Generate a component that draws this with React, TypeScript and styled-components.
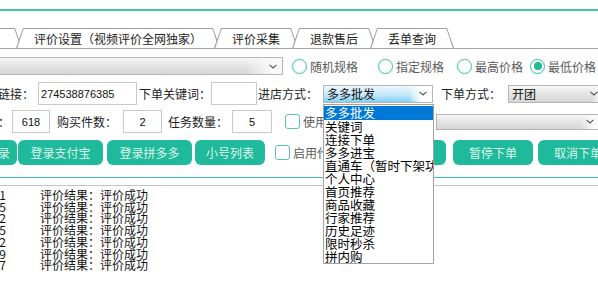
import React from "react";
import styled, { createGlobalStyle, css } from "styled-components";

const GlobalStyle = createGlobalStyle`
  html, body {
    margin: 0;
    padding: 0;
    background: #fff;
    overflow: hidden;
  }
  body {
    font-family: "Noto Sans CJK SC", "Microsoft YaHei", sans-serif;
    font-size: 12px;
    color: #222;
  }
`;

const Window = styled.div`
  width: 598px;
  height: 288px;
  overflow: hidden;
  background: #fff;
`;

const Header = styled.div`
  height: 9px;
  border-bottom: 2px solid #3cc9a3;
`;

const TabStrip = styled.div`
  display: flex;
  height: 20px;
  margin-top: 17px;
  margin-left: -70px;
  border-bottom: 1px solid #a5a5a5;
`;

const Tab = styled.div<{ $pr?: number }>`
  position: relative;
  isolation: isolate;
  display: flex;
  align-items: center;
  height: 20px;
  padding: 0 ${(p) => p.$pr ?? 18}px 0 18px;
  margin-left: -6px;
  white-space: nowrap;
  color: #222;

  &:first-child {
    margin-left: 0;
  }

  &::before,
  &::after {
    content: "";
    position: absolute;
    inset: 0;
  }
  &::before {
    background: #a0a0a0;
    clip-path: polygon(0 100%, 7px 0, calc(100% - 7px) 0, 100% 100%);
  }
  &::after {
    background: #fff;
    clip-path: polygon(
      1.3px 100%,
      7.6px 1px,
      calc(100% - 7.6px) 1px,
      calc(100% - 1.3px) 100%
    );
  }

  span {
    position: relative;
    z-index: 1;
  }
`;

const Panel = styled.div`
  padding-top: 8px;
  padding-bottom: 12px;
  border-bottom: 1px solid #41c3b0;
`;

const Row = styled.div<{ $h: number; $mt: number; $ml?: number }>`
  display: flex;
  align-items: center;
  height: ${(p) => p.$h}px;
  margin-top: ${(p) => p.$mt}px;
  margin-left: ${(p) => p.$ml ?? 0}px;
  white-space: nowrap;
`;

const Label = styled.span<{ $ml?: number; $muted?: boolean }>`
  flex: none;
  margin-left: ${(p) => p.$ml ?? 0}px;
  color: ${(p) => (p.$muted ? "#5a5a5a" : "#222")};
`;

const TextBox = styled.input<{ $w: number; $ml?: number; $center?: boolean }>`
  flex: none;
  box-sizing: border-box;
  width: ${(p) => p.$w}px;
  height: 23px;
  margin: 0 0 0 ${(p) => p.$ml ?? 0}px;
  padding: 0 2px;
  border: 1px solid #c9c9c9;
  background: #fff;
  font-family: "Liberation Sans", Arial, sans-serif;
  font-size: 11px;
  color: #111;
  text-align: ${(p) => (p.$center ? "center" : "left")};
  outline: none;
`;

const selectLook = {
  gray: css`
    background: linear-gradient(to right, transparent 88%, #fafafa 97%),
      linear-gradient(#f6f6f6, #e4e4e4 50%, #d6d6d6);
  `,
  blue: css`
    background: linear-gradient(to right, transparent 78%, #fff 90%),
      linear-gradient(#eef7fd, #c4e6f8 55%, #82cff3);
  `,
};

const Select = styled.div<{
  $w: number;
  $h: number;
  $ml?: number;
  $look: "gray" | "blue";
}>`
  position: relative;
  flex: none;
  display: flex;
  align-items: center;
  box-sizing: border-box;
  width: ${(p) => p.$w}px;
  height: ${(p) => p.$h}px;
  margin-left: ${(p) => p.$ml ?? 0}px;
  padding-left: 3px;
  border: 1px solid #b5b5b5;
  ${(p) => selectLook[p.$look]}
  color: #111;
`;

const Arrow = styled.span`
  display: flex;
  align-items: center;
  justify-content: center;
  width: 16px;
  margin-left: auto;
  margin-right: 1px;
`;

const DropList = styled.ul`
  position: absolute;
  top: calc(100% + 2px);
  left: -1px;
  z-index: 10;
  box-sizing: border-box;
  width: 111px;
  margin: 0;
  padding: 1px 0 0;
  list-style: none;
  background: #fff;
  border: 1px solid #a3a3a3;
`;

const DropItem = styled.li<{ $active?: boolean }>`
  height: 13px;
  line-height: 13px;
  padding-left: 1px;
  overflow: hidden;
  white-space: nowrap;
  font-size: 12.5px;
  color: ${(p) => (p.$active ? "#fff" : "#000")};
  background: ${(p) => (p.$active ? "#0078d7" : "transparent")};

  &:first-child {
    height: 14px;
    line-height: 14px;
  }
`;

const RadioItem = styled.span<{ $ml: number }>`
  display: flex;
  align-items: center;
  gap: 3px;
  margin-left: ${(p) => p.$ml}px;
  color: #5a5a5a;
`;

const RadioDot = styled.span<{ $checked?: boolean }>`
  position: relative;
  box-sizing: border-box;
  width: 15px;
  height: 15px;
  border: 1.5px solid #4cc2a8;
  border-radius: 50%;
  background: radial-gradient(circle, #ffffff 45%, #e3f6f1 100%);
  box-shadow: 0 0 2px rgba(76, 194, 168, 0.45);

  &::after {
    content: "";
    display: ${(p) => (p.$checked ? "block" : "none")};
    position: absolute;
    inset: 2.5px;
    border-radius: 50%;
    background: #1fbb92;
  }
`;

const CheckBox = styled.span<{ $ml: number }>`
  flex: none;
  box-sizing: border-box;
  width: 15px;
  height: 15px;
  margin-left: ${(p) => p.$ml}px;
  border: 1px solid #5cc3ad;
  border-radius: 3px;
  background: #fff;
`;

const Button = styled.button<{ $w: number; $ml?: number }>`
  flex: none;
  width: ${(p) => p.$w}px;
  height: 25px;
  margin-left: ${(p) => p.$ml ?? 0}px;
  padding: 0;
  border: none;
  border-radius: 6px;
  background: #1fba9b;
  color: #dcf4ed;
  font-family: inherit;
  font-size: 12px;
`;

const LogBox = styled.div`
  margin-top: 7px;
  padding-top: 3px;
  border-top: 1px solid #c6c6c6;
`;

const LogGrid = styled.div`
  display: grid;
  grid-template-columns: 114px auto;
  column-gap: 34px;
  margin-left: -108px;
  font-size: 12px;
  line-height: 11.7px;
  color: #111;
  white-space: nowrap;
`;

const LogTime = styled.span`
  text-align: right;
`;

function Chevron() {
  return (
    <svg width="8" height="5" viewBox="0 0 8 5">
      <path d="M0.5 0.8 L4 4 L7.5 0.8" fill="none" stroke="#555" strokeWidth="1.1" />
    </svg>
  );
}

const tabs = [
  { text: "宝贝设置", pr: 26 },
  { text: "评价设置（视频评价全网独家）" },
  { text: "评价采集" },
  { text: "退款售后" },
  { text: "丢单查询" },
];

const radios = [
  { text: "随机规格", ml: 9 },
  { text: "指定规格", ml: 20 },
  { text: "最高价格", ml: 13 },
  { text: "最低价格", ml: 7, checked: true },
];

const entryModes = [
  "多多批发",
  "关键词",
  "连接下单",
  "多多进宝",
  "直通车（暂时下架功能）",
  "个人中心",
  "首页推荐",
  "商品收藏",
  "行家推荐",
  "历史足迹",
  "限时秒杀",
  "拼内购",
];

const logs = [
  "2024-03-18 15:42:21",
  "2024-03-18 15:42:35",
  "2024-03-18 15:42:52",
  "2024-03-18 15:43:05",
  "2024-03-18 15:43:22",
  "2024-03-18 15:43:39",
  "2024-03-18 15:43:57",
];

export default function App() {
  return (
    <Window>
      <GlobalStyle />
      <Header />
      <TabStrip>
        {tabs.map((t) => (
          <Tab key={t.text} $pr={t.pr}>
            <span>{t.text}</span>
          </Tab>
        ))}
      </TabStrip>

      <Panel>
        <Row $h={18} $mt={0}>
          <Select $w={303} $h={18} $ml={-20} $look="gray">
            <span />
            <Arrow>
              <Chevron />
            </Arrow>
          </Select>
          {radios.map((r) => (
            <RadioItem key={r.text} $ml={r.ml}>
              <RadioDot $checked={r.checked} />
              {r.text}
            </RadioItem>
          ))}
        </Row>

        <Row $h={23} $mt={7} $ml={-26}>
          <Label>商品链接：</Label>
          <TextBox $w={99} $ml={4} value="274538876385" readOnly />
          <Label $ml={2}>下单关键词：</Label>
          <TextBox $w={46} value="" readOnly />
          <Label $ml={1}>进店方式：</Label>
          <Select $w={110} $h={18} $ml={5} $look="blue">
            <span>多多批发</span>
            <Arrow>
              <Chevron />
            </Arrow>
            <DropList>
              {entryModes.map((m, i) => (
                <DropItem key={m} $active={i === 0}>
                  {m}
                </DropItem>
              ))}
            </DropList>
          </Select>
          <Label $ml={8}>下单方式：</Label>
          <Select $w={96} $h={18} $ml={7} $look="gray">
            <span>开团</span>
            <Arrow>
              <Chevron />
            </Arrow>
          </Select>
        </Row>

        <Row $h={23} $mt={5} $ml={-50}>
          <Label>间隔秒数：</Label>
          <TextBox $w={38} $ml={2} $center value="618" readOnly />
          <Label $ml={7}>购买件数：</Label>
          <TextBox $w={39} $ml={6} $center value="2" readOnly />
          <Label $ml={6}>任务数量：</Label>
          <TextBox $w={40} $ml={4} $center value="5" readOnly />
          <CheckBox $ml={13} />
          <Label $ml={3} $muted>
            使用随机延迟
          </Label>
          <Select $w={164} $h={16} $ml={61} $look="gray">
            <span />
            <Arrow>
              <Chevron />
            </Arrow>
          </Select>
        </Row>

        <Row $h={25} $mt={7} $ml={-45}>
          <Button $w={62}>账号登录</Button>
          <Button $w={85} $ml={1}>
            登录支付宝
          </Button>
          <Button $w={85} $ml={4}>
            登录拼多多
          </Button>
          <Button $w={70} $ml={3}>
            小号列表
          </Button>
          <CheckBox $ml={10} />
          <Label $ml={3} $muted>
            启用代理
          </Label>
          <Button $w={81} $ml={24}>
            开始下单
          </Button>
          <Button $w={80} $ml={7}>
            暂停下单
          </Button>
          <Button $w={80} $ml={5}>
            取消下单
          </Button>
        </Row>
      </Panel>

      <LogBox>
        <LogGrid>
          {logs.map((t) => (
            <React.Fragment key={t}>
              <LogTime>{t}</LogTime>
              <span>评价结果：评价成功</span>
            </React.Fragment>
          ))}
        </LogGrid>
      </LogBox>
    </Window>
  );
}
